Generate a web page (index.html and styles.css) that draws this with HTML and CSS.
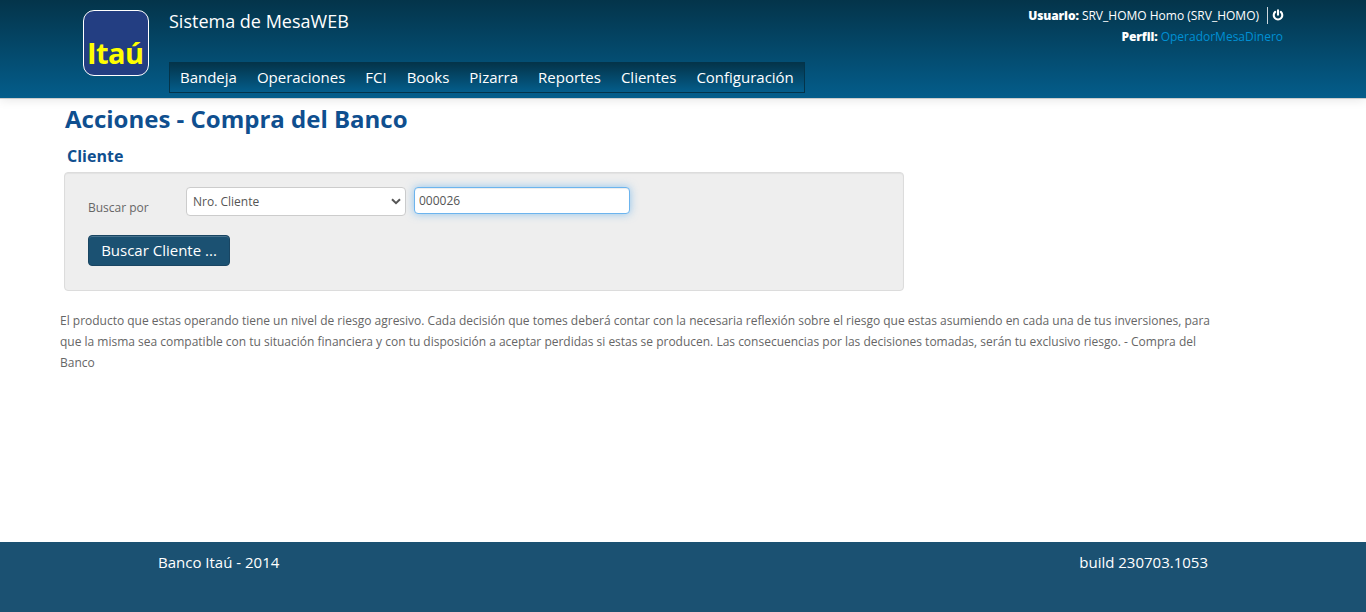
FILE: index.html
```html
<!DOCTYPE html>
<html lang="es">
<head>
<meta charset="utf-8">
<title>Sistema de MesaWEB</title>
<link rel="stylesheet" href="styles.css">
</head>
<body>
<header class="header">
  <div class="logo"><span class="logo-text">Itaú</span></div>
  <div class="brand">
    <div class="app-name">Sistema de MesaWEB</div>
    <nav class="menu">
      <a class="menu-item">Bandeja</a>
      <a class="menu-item">Operaciones</a>
      <a class="menu-item">FCI</a>
      <a class="menu-item">Books</a>
      <a class="menu-item">Pizarra</a>
      <a class="menu-item">Reportes</a>
      <a class="menu-item">Clientes</a>
      <a class="menu-item">Configuración</a>
    </nav>
  </div>
  <div class="session">
    <div class="session-row">
      <span class="user"><b>Usuario:</b> SRV_HOMO Homo (SRV_HOMO)</span>
      <a class="logout"><svg width="12" height="12" viewBox="0 0 12 12" fill="none" stroke="#fff" stroke-width="2.1" stroke-linecap="round"><path d="M3.2 2.9A4.3 4.3 0 1 0 8.8 2.9M6 1.4V5.8"/></svg></a>
    </div>
    <div class="session-row profile"><span><b>Perfil:</b> <a class="profile-link">OperadorMesaDinero</a></span></div>
  </div>
</header>
<main class="main">
  <h1 class="title">Acciones - Compra del Banco</h1>
  <h2 class="subtitle">Cliente</h2>
  <form class="well">
    <div class="fields">
      <label class="label">Buscar por</label>
      <div class="select">Nro. Cliente<svg class="chevron" width="10" height="7" viewBox="0 0 10 7" fill="none" stroke="#555" stroke-width="2"><path d="M1 1.2L5 5.2L9 1.2"/></svg></div>
      <input class="input" type="text" value="000026">
    </div>
    <button class="button" type="button">Buscar Cliente ...</button>
  </form>
  <p class="notice">El producto que estas operando tiene un nivel de riesgo agresivo. Cada decisión que tomes deberá contar con la necesaria reflexión sobre el riesgo que estas asumiendo en cada una de tus inversiones, para que la misma sea compatible con tu situación financiera y con tu disposición a aceptar perdidas si estas se producen. Las consecuencias por las decisiones tomadas, serán tu exclusivo riesgo. - Compra del Banco</p>
</main>
<footer class="footer">
  <span>Banco Itaú - 2014</span>
  <span>build 230703.1053</span>
</footer>
</body>
</html>
```
FILE: styles.css
```css
* { box-sizing: border-box; }
body {
  margin: 0;
  height: 612px;
  display: flex;
  flex-direction: column;
  overflow: hidden;
  background: #fff;
  color: #666;
  font: 12px/21px "Open Sans", sans-serif;
}
.header {
  height: 99px;
  flex: none;
  display: flex;
  align-items: flex-start;
  padding: 0 82px 0 83px;
  color: #fff;
  background: linear-gradient(#04344a, #045d8b);
  border-bottom: 1px solid #ccc;
  box-shadow: 0 1px 10px rgba(0, 0, 0, .1);
}
.logo {
  width: 66px;
  height: 66px;
  margin-top: 10px;
  border: 1px solid #fff;
  border-radius: 11px;
  background: #233e82;
}
.logo-text {
  display: block;
  padding: 25px 0 0 3px;
  color: #ff0;
  font-size: 29px;
  font-weight: 700;
  line-height: 34px;
  letter-spacing: -.6px;
}
.brand { margin-left: 20px; }
.app-name {
  height: 62px;
  padding-top: 10px;
  font-size: 18px;
  line-height: 22px;
}
.menu {
  display: flex;
  gap: 20px;
  width: 636px;
  height: 31px;
  padding: 0 10px;
  border: 1px solid #04344a;
  background: linear-gradient(#04344a, #045d8b);
  font-size: 15px;
  line-height: 29px;
}
.menu-item { letter-spacing: -.01px; }
.session {
  margin-left: auto;
  padding-top: 5px;
}
.session b { font-weight: 800; letter-spacing: -.12px; }
.session-row {
  display: flex;
  justify-content: flex-end;
  height: 21px;
}
.logout {
  height: 17px;
  margin: 2px 0 0 8px;
  padding: 2px 0 0 4px;
  border-left: 1px solid #ccd6dc;
  line-height: 0;
}
.profile { padding-right: 1px; }
.profile-link { color: #0090d4; }
.main {
  flex: 1;
  padding: 0 150px 0 60px;
}
.title {
  margin: 0;
  padding: 4px 0 0 5px;
  color: #0f4f8f;
  font-size: 24px;
  font-weight: 700;
  line-height: 32px;
}
.subtitle {
  margin: 0;
  padding: 10px 0 0 7px;
  color: #0f4f8f;
  font-size: 16px;
  font-weight: 700;
  line-height: 22px;
}
.well {
  width: 840px;
  height: 119px;
  margin: 5px 0 0 4px;
  padding: 14px 23px;
  border: 1px solid #dcdcdc;
  border-radius: 4px;
  background: #eee;
  box-shadow: inset 0 1px 1px rgba(0, 0, 0, .05);
}
.fields { display: flex; align-items: flex-start; }
.label {
  width: 98px;
  padding-top: 10px;
}
.select {
  display: flex;
  align-items: center;
  justify-content: space-between;
  width: 220px;
  height: 29px;
  padding: 0 4px 0 6px;
  border: 1px solid #ccc;
  border-radius: 4px;
  background: #fff;
  color: #555;
}
.input {
  width: 216px;
  height: 27px;
  margin-left: 8px;
  padding: 0 4px;
  border: 1px solid #6cb4ee;
  border-radius: 4px;
  outline: 0;
  background: #fff;
  box-shadow: inset 0 1px 1px rgba(0, 0, 0, .075), 0 0 8px rgba(82, 168, 236, .6);
  color: #555;
  font: inherit;
}
.button {
  display: block;
  width: 142px;
  height: 31px;
  margin-top: 17px;
  padding: 0;
  border: 1px solid #194562;
  border-radius: 4px;
  background: #1b5172;
  box-shadow: inset 0 1px 0 rgba(255, 255, 255, .2);
  color: #fff;
  font: 15px/29px "Open Sans", sans-serif;
}
.notice { margin: 19px 0 0; letter-spacing: -.005px; }
.footer {
  flex: none;
  display: flex;
  justify-content: space-between;
  height: 70px;
  padding: 10px 158px;
  background: #1b5172;
  color: #fff;
  font-size: 15px;
}
```
